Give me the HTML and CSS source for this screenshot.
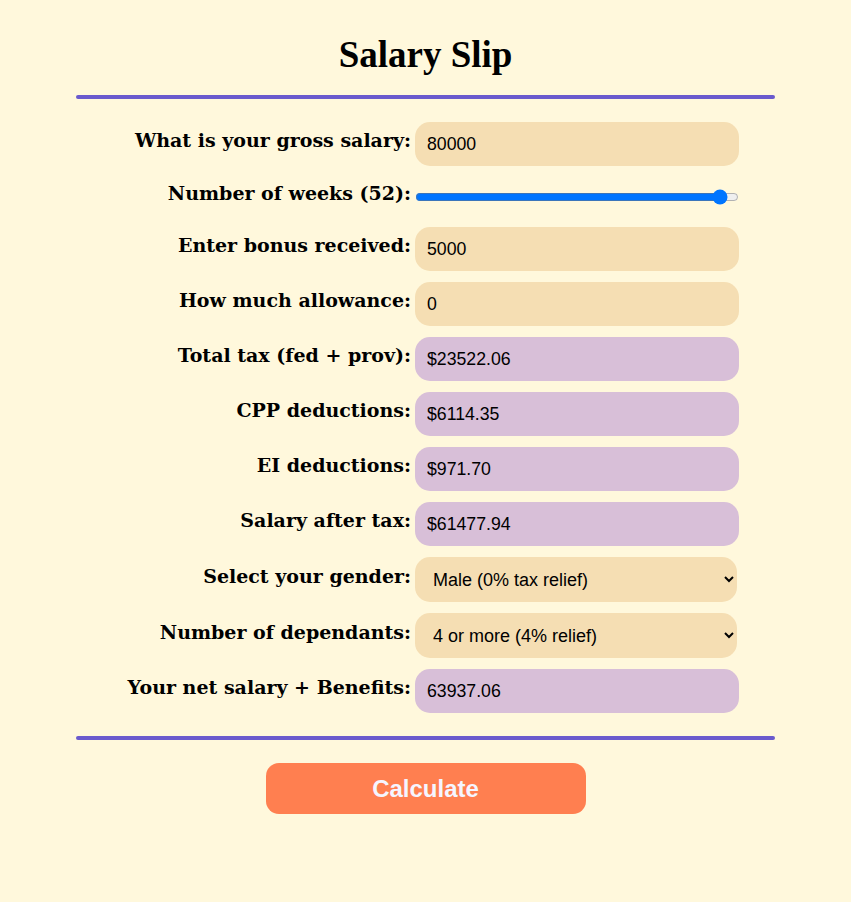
FILE: index.html
```html
<!DOCTYPE html>
<html>
<head>
<meta charset="utf-8">
<link rel="stylesheet" href="styles.css">
</head>
<body>
<div class="page">
  <h1 class="title">Salary Slip</h1>
  <div class="rule"></div>
  <div class="form">
    <label class="lbl">What is your gross salary:</label>
    <input class="field in" type="text" value="80000">
    <label class="lbl">Number of weeks (52):</label>
    <div class="slider-cell"><input class="slider" type="range" min="0" max="54" value="52"></div>
    <label class="lbl">Enter bonus received:</label>
    <input class="field in" type="text" value="5000">
    <label class="lbl">How much allowance:</label>
    <input class="field in" type="text" value="0">
    <label class="lbl">Total tax (fed + prov):</label>
    <input class="field out" type="text" value="$23522.06">
    <label class="lbl">CPP deductions:</label>
    <input class="field out" type="text" value="$6114.35">
    <label class="lbl">EI deductions:</label>
    <input class="field out" type="text" value="$971.70">
    <label class="lbl">Salary after tax:</label>
    <input class="field out" type="text" value="$61477.94">
    <label class="lbl">Select your gender:</label>
    <select class="field sel"><option>Male (0% tax relief)</option></select>
    <label class="lbl">Number of dependants:</label>
    <select class="field sel"><option>4 or more (4% relief)</option></select>
    <label class="lbl">Your net salary + Benefits:</label>
    <input class="field out" type="text" value="63937.06">
  </div>
  <div class="rule rule-bottom"></div>
  <div class="actions"><button class="btn">Calculate</button></div>
</div>
</body>
</html>
```
FILE: styles.css
```css
html, body {
  margin: 0;
  padding: 0;
  background: #fff8dc;
}
.page {
  width: 699px;
  margin: 0 0 0 76px;
  padding-top: 34px;
}
.title {
  margin: 0;
  text-align: center;
  font-family: "Liberation Serif", serif;
  font-weight: bold;
  font-size: 37px;
  line-height: 42px;
  color: #000;
}
.rule {
  height: 4px;
  background: #6a5acd;
  border-radius: 2px;
  margin-top: 19px;
}
.rule-bottom {
  margin-top: 23px;
}
.form {
  display: grid;
  grid-template-columns: 335px 324px;
  column-gap: 4px;
  row-gap: 11px;
  margin-top: 23px;
  align-items: center;
}
.lbl {
  text-align: right;
  font-family: "DejaVu Serif", serif;
  font-weight: bold;
  font-size: 19px;
  color: #000;
  white-space: nowrap;
  margin-top: -8px;
}
.field {
  box-sizing: border-box;
  height: 44px;
  width: 324px;
  border: none;
  border-radius: 15px;
  padding: 0 12px;
  font-family: "Liberation Sans", Arial, sans-serif;
  font-size: 17.7px;
  color: #000;
  outline: none;
}
.in { background: #f5deb3; }
.out { background: #d8bfd8; }
.sel {
  background-color: #f5deb3;
  height: 45px;
  width: 322px;
  padding-left: 14px;
  font-size: 18px;
}
.slider-cell {
  height: 39px;
  display: flex;
  align-items: center;
}
.slider {
  width: 324px;
  margin: 0;
}
.actions {
  display: flex;
  justify-content: center;
  margin-top: 23px;
}
.btn {
  width: 320px;
  height: 51px;
  border: none;
  border-radius: 13px;
  background: #ff7f50;
  color: #f5f5ff;
  font-family: "Liberation Sans", Arial, sans-serif;
  font-weight: bold;
  font-size: 24px;
}
```
